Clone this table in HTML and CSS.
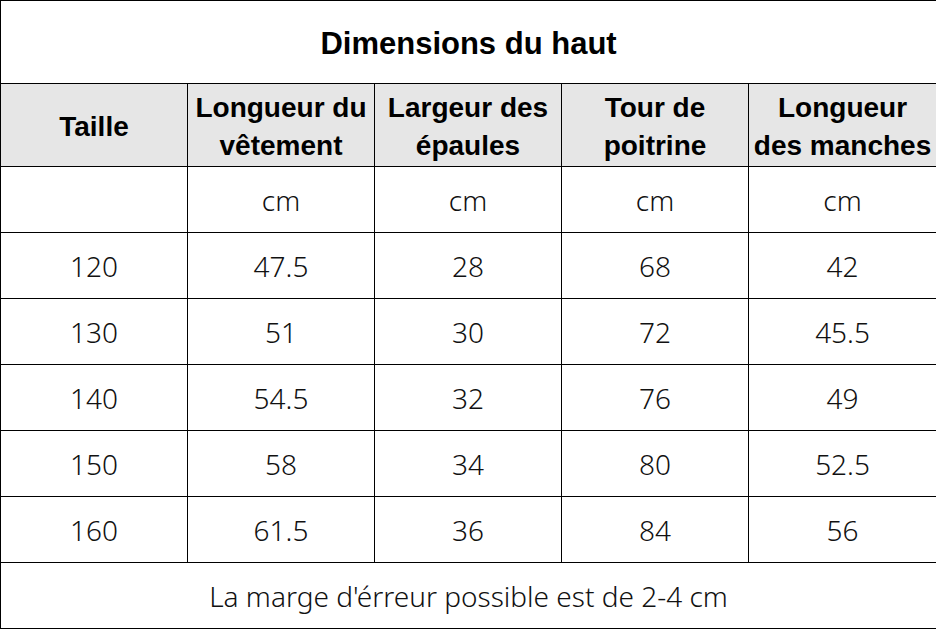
FILE: index.html
```html
<!DOCTYPE html>
<html lang="fr">
<head>
<meta charset="utf-8">
<link rel="stylesheet" href="styles.css">
</head>
<body>
<table class="size-table">
  <colgroup>
    <col class="c1"><col class="c2"><col class="c3"><col class="c4"><col class="c5">
  </colgroup>
  <tr class="title-row"><td colspan="5">Dimensions du haut</td></tr>
  <tr class="head-row">
    <td>Taille</td>
    <td>Longueur du<br>vêtement</td>
    <td>Largeur des<br>épaules</td>
    <td>Tour de<br>poitrine</td>
    <td>Longueur<br>des manches</td>
  </tr>
  <tr class="row"><td></td><td>cm</td><td>cm</td><td>cm</td><td>cm</td></tr>
  <tr class="row"><td>120</td><td>47.5</td><td>28</td><td>68</td><td>42</td></tr>
  <tr class="row"><td>130</td><td>51</td><td>30</td><td>72</td><td>45.5</td></tr>
  <tr class="row"><td>140</td><td>54.5</td><td>32</td><td>76</td><td>49</td></tr>
  <tr class="row"><td>150</td><td>58</td><td>34</td><td>80</td><td>52.5</td></tr>
  <tr class="row"><td>160</td><td>61.5</td><td>36</td><td>84</td><td>56</td></tr>
  <tr class="row foot-row"><td colspan="5">La marge d'érreur possible est de 2-4 cm</td></tr>
</table>
</body>
</html>
```

FILE: styles.css
```css
html, body {
  margin: 0;
  padding: 0;
  background: #ffffff;
}
.size-table {
  width: 936px;
  border-collapse: collapse;
  table-layout: fixed;
  color: #000;
}
.size-table td {
  border: 1px solid #000;
  text-align: center;
  vertical-align: middle;
  padding: 0;
  white-space: nowrap;
  overflow: hidden;
}
.c1, .c2, .c3, .c4 { width: 187px; }
.c5 { width: 188px; }
.title-row td {
  height: 78px;
  padding-top: 4px;
  font-family: "Liberation Sans", Arial, sans-serif;
  font-weight: bold;
  font-size: 31px;
}
.head-row td {
  height: 78px;
  padding-top: 4px;
  background: #e6e6e6;
  font-family: "Liberation Sans", Arial, sans-serif;
  font-weight: bold;
  font-size: 28px;
  line-height: 38px;
}
.row td {
  height: 65px;
  font-family: "Noto Sans", "Liberation Sans", sans-serif;
  font-weight: 300;
  font-size: 28px;
  color: #111;
}
.foot-row td {
  font-size: 28px;
}
```
